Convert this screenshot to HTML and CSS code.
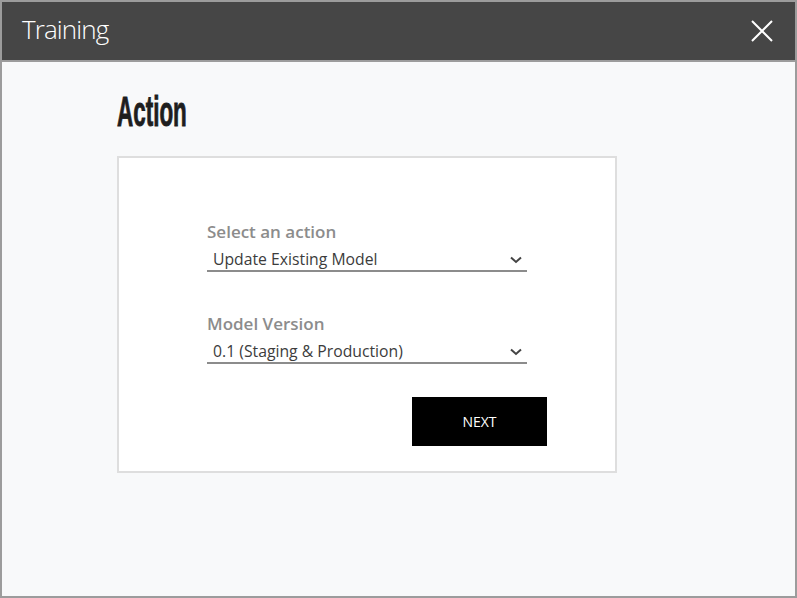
FILE: index.html
```html
<!DOCTYPE html>
<html lang="en">
<head>
<meta charset="utf-8">
<title>Training</title>
<link rel="stylesheet" href="styles.css">
</head>
<body>
<div class="window">
  <header class="titlebar">
    <h2 class="title">Training</h2>
    <button class="close" aria-label="Close">
      <svg width="22" height="22" viewBox="0 0 22 22"><path d="M1 1 L21 21 M21 1 L1 21" stroke="#fff" stroke-width="2" fill="none"/></svg>
    </button>
  </header>
  <main class="content">
    <h1 class="heading"><span class="heading-text">Action</span></h1>
    <section class="card">
      <form class="form">
        <div class="field">
          <label class="label">Select an action</label>
          <div class="select">
            <span class="value">Update Existing Model</span>
            <svg class="chev" width="12" height="8" viewBox="0 0 12 8"><path d="M1 1.5 L6 6 L11 1.5" stroke="#444" stroke-width="2" fill="none"/></svg>
          </div>
        </div>
        <div class="field">
          <label class="label">Model Version</label>
          <div class="select">
            <span class="value">0.1 (Staging &amp; Production)</span>
            <svg class="chev" width="12" height="8" viewBox="0 0 12 8"><path d="M1 1.5 L6 6 L11 1.5" stroke="#444" stroke-width="2" fill="none"/></svg>
          </div>
        </div>
        <button type="button" class="next">NEXT</button>
      </form>
    </section>
  </main>
</div>
</body>
</html>
```
FILE: styles.css
```css
html, body {
  margin: 0;
  padding: 0;
}
body {
  font-family: "Open Sans", "Liberation Sans", sans-serif;
}
.window {
  width: 797px;
  height: 598px;
  box-sizing: border-box;
  border: 2px solid #9c9c9c;
  background: #f8f9fa;
  display: flex;
  flex-direction: column;
}
.titlebar {
  height: 60px;
  box-sizing: border-box;
  background: #464646;
  border-bottom: 2px solid #9c9c9c;
  display: flex;
  justify-content: space-between;
  padding: 10px 22px 0 20px;
}
.title {
  margin: 0;
  font-weight: 300;
  font-size: 26px;
  line-height: 34px;
  color: #fff;
  letter-spacing: -0.9px;
}
.close {
  border: 0;
  background: transparent;
  padding: 0;
  margin-top: 8px;
  width: 22px;
  height: 22px;
  display: flex;
}
.content {
  flex: 1;
  padding: 30px 0 0 115px;
}
.heading {
  margin: 0;
  height: 42px;
  font-family: "Liberation Sans", Arial, sans-serif;
  font-weight: 700;
  font-size: 22px;
  line-height: 22px;
  color: #1e1e1e;
}
.heading-text {
  display: inline-block;
  transform: scale(1.02, 1.9);
  transform-origin: top left;
  -webkit-text-stroke: 0.5px #1e1e1e;
}
.card {
  margin-top: 22px;
  width: 500px;
  height: 317px;
  box-sizing: border-box;
  border: 2px solid #dedede;
  background: #fff;
  padding: 63px 0 0 88px;
}
.form {
  width: 340px;
  display: flex;
  flex-direction: column;
  gap: 41px;
}
.field {
  width: 320px;
  display: flex;
  flex-direction: column;
  gap: 6px;
}
.label {
  font-size: 17px;
  font-weight: 600;
  line-height: 22px;
  color: #8c8c8c;
}
.select {
  display: flex;
  align-items: center;
  justify-content: space-between;
  padding: 0 5px 1px 6px;
  border-bottom: 2px solid #8c8c8c;
}
.value {
  font-size: 15.75px;
  line-height: 20px;
  color: #3c3c3c;
}
.chev {
  margin-top: 2px;
}
.next {
  align-self: flex-end;
  margin-top: -8px;
  width: 135px;
  height: 49px;
  border: 0;
  background: #000;
  color: #fff;
  font-family: "Open Sans", "Liberation Sans", sans-serif;
  font-size: 14px;
  font-weight: 400;
}
```
